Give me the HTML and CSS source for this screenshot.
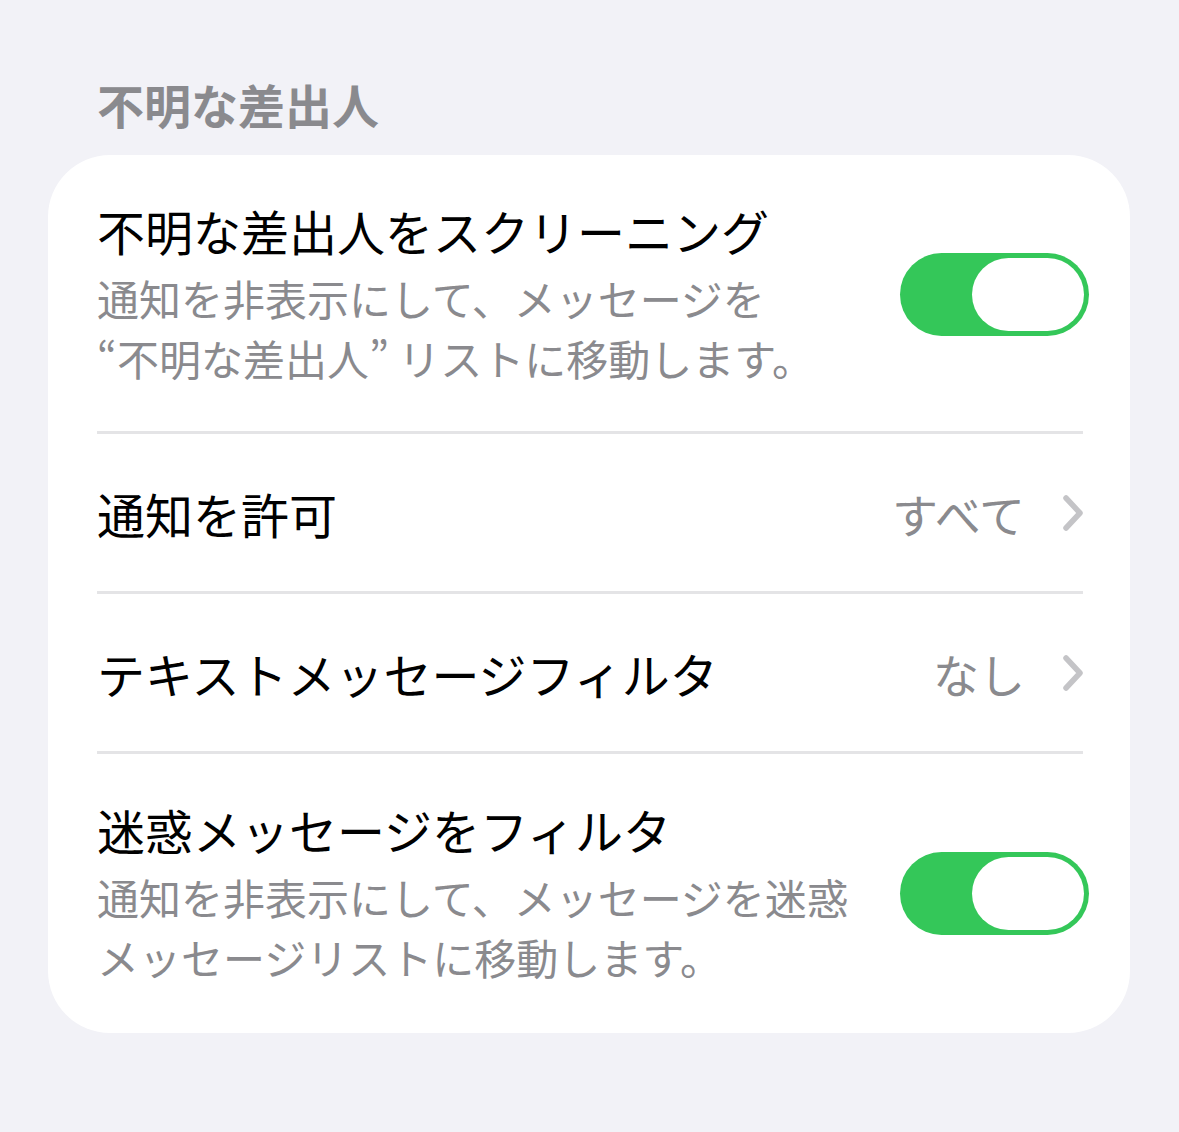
FILE: index.html
```html
<!DOCTYPE html>
<html lang="ja">
<head>
<meta charset="utf-8">
<title>不明な差出人</title>
<link rel="stylesheet" href="styles.css">
</head>
<body>
  <div class="page">
    <h2 class="group-title">不明な差出人</h2>

    <div class="card">
      <div class="row row-tall">
        <div class="text">
          <div class="label">不明な差出人をスクリーニング</div>
          <div class="note">通知を非表示にして、メッセージを<br>“不明な差出人” リストに移動します。</div>
        </div>
        <div class="switch on"><span class="knob"></span></div>
      </div>

      <div class="row row-link">
        <div class="label">通知を許可</div>
        <div class="value">すべて
          <svg class="chevron" viewBox="0 0 20 36" aria-hidden="true"><path d="M3 3 L17 18 L3 33"/></svg>
        </div>
      </div>

      <div class="row row-link">
        <div class="label">テキストメッセージフィルタ</div>
        <div class="value">なし
          <svg class="chevron" viewBox="0 0 20 36" aria-hidden="true"><path d="M3 3 L17 18 L3 33"/></svg>
        </div>
      </div>

      <div class="row row-tall">
        <div class="text">
          <div class="label">迷惑メッセージをフィルタ</div>
          <div class="note">通知を非表示にして、メッセージを迷惑<br>メッセージリストに移動します。</div>
        </div>
        <div class="switch on"><span class="knob"></span></div>
      </div>
    </div>
  </div>
</body>
</html>
```

FILE: styles.css
```css
html, body {
  margin: 0;
  padding: 0;
}

body {
  background: #f2f2f7;
  font-family: "Noto Sans CJK JP", "Noto Sans", sans-serif;
  color: #000;
}

.page {
  padding: 74px 49px 0 48px;
}

/* セクション見出し */
.group-title {
  margin: 0 0 21px 49px;
  font-size: 47px;
  line-height: 60px;
  font-weight: 700;
  color: #8a8a8e;
}

.card {
  background: #fff;
  border-radius: 62px;
  padding: 0 47px 0 49px;
}

.row {
  display: flex;
  align-items: center;
  justify-content: space-between;
  border-top: 3px solid #e4e4e6;
}
.row:first-child { border-top: none; }

.row-tall { padding: 45px 0 43px; }
.row-tall:last-child { padding-bottom: 46px; }
.row-link { height: 157px; }

.label {
  font-size: 48px;
  line-height: 60px;
}

.note {
  margin-top: 8px;
  font-size: 42px;
  line-height: 60px;
  color: #8a8a8e;
}

.value {
  display: flex;
  align-items: center;
  gap: 38px;
  font-size: 46px;
  color: #8a8a8e;
}

.chevron {
  width: 20px;
  height: 36px;
  fill: none;
  stroke: #c4c4c7;
  stroke-width: 5.5;
  stroke-linecap: round;
  stroke-linejoin: round;
}

/* トグル */
.switch {
  position: relative;
  flex: none;
  width: 189px;
  height: 83px;
  margin-right: -6px;
  border-radius: 42px;
  background: #34c759;
}
.switch .knob {
  position: absolute;
  top: 5px;
  right: 5px;
  width: 112px;
  height: 73px;
  border-radius: 37px;
  background: #fff;
}
```
